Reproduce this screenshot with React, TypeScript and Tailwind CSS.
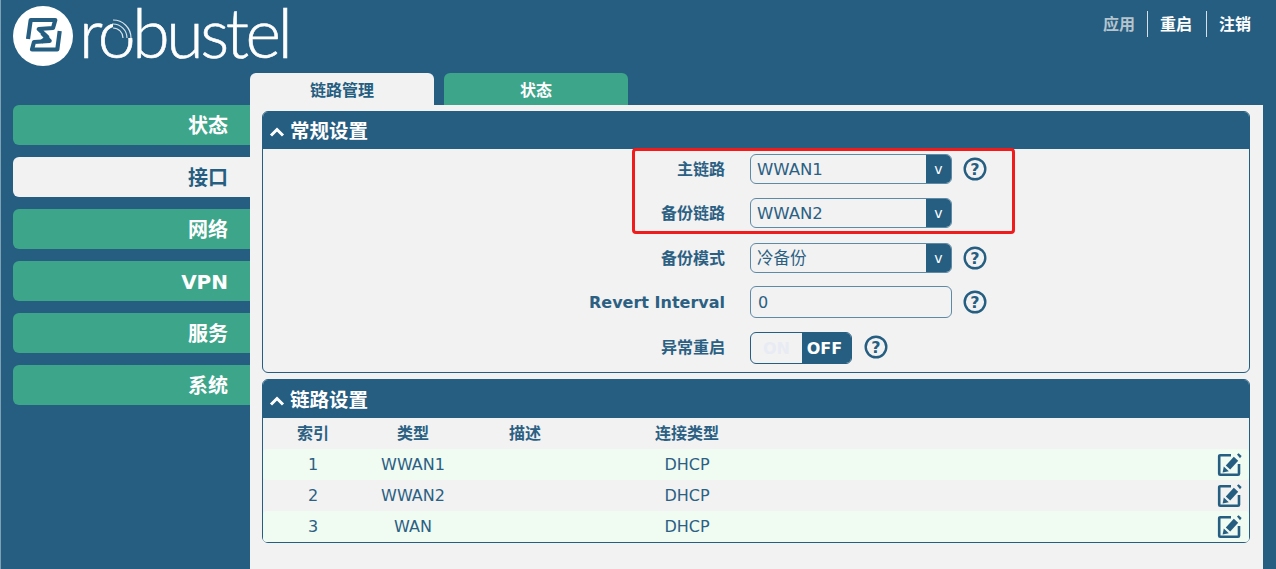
import React from 'react'

const FONT = 'font-["DejaVu_Sans","Noto_Sans_CJK_SC",sans-serif]'

const NAV = [
  { label: '状态' },
  { label: '接口', active: true },
  { label: '网络' },
  { label: 'VPN' },
  { label: '服务' },
  { label: '系统' },
]

const LINKS = [
  { id: 'wwan1', index: '1', type: 'WWAN1', conn: 'DHCP', tinted: true },
  { id: 'wwan2', index: '2', type: 'WWAN2', conn: 'DHCP', tinted: false },
  { id: 'wan', index: '3', type: 'WAN', conn: 'DHCP', tinted: true },
]

function Logo() {
  return (
    <div className="flex items-start h-[73px] pl-[12px]">
      <svg width="60" height="60" viewBox="0 0 60 60" className="shrink-0 mt-[6px]">
        <circle cx="30" cy="30" r="30" fill="#ffffff" />
        <g fill="none" stroke="#255e81" strokeWidth="4.2" strokeLinejoin="round">
          <polyline points="15,33 17.7,14 42.3,14 40,22 25.7,23 34.3,31 28.3,36" />
          <polyline points="46.7,25 44.3,43.5 19,43.5 21,36 36.7,35 29,27" />
        </g>
      </svg>
      <svg width="212" height="66" viewBox="0 0 212 66" className="ml-[6px] shrink-0">
        <text
          x="0"
          y="58"
          fontFamily="Lato"
          fontWeight="300"
          fontSize="68"
          letterSpacing="-3.4"
          fill="#ffffff"
          stroke="#ffffff"
          strokeWidth="0.6"
        >
          robustel
        </text>
        <g fill="none" transform="translate(31 18)">
          <path d="M3 6 A14 14 0 0 1 17 20" stroke="#255e81" strokeWidth="12" />
          <path d="M3 2 A18 18 0 0 1 21 20" stroke="#d7e2e9" strokeWidth="1.2" />
          <path d="M3 6 A14 14 0 0 1 17 20" stroke="#d7e2e9" strokeWidth="1.2" />
          <path d="M3 10 A10 10 0 0 1 13 20" stroke="#d7e2e9" strokeWidth="1.2" />
        </g>
      </svg>
    </div>
  )
}

function HelpIcon() {
  return (
    <svg width="24" height="24" viewBox="0 0 24 24" className="shrink-0">
      <circle cx="12" cy="12" r="10.3" fill="none" stroke="#255e81" strokeWidth="2.4" />
      <text x="12" y="17.5" textAnchor="middle" fontSize="16" fontWeight="700" fill="#255e81" fontFamily="DejaVu Sans">
        ?
      </text>
    </svg>
  )
}

function Chevron() {
  return (
    <svg width="16" height="12" viewBox="0 0 16 12" className="shrink-0">
      <polyline points="2,9.5 8,3.5 14,9.5" fill="none" stroke="#ffffff" strokeWidth="3" />
    </svg>
  )
}

function EditIcon() {
  return (
    <svg width="25" height="25" viewBox="0 0 25 25">
      <path d="M14 3.2 H3.2 A1 1 0 0 0 2.2 4.2 V21.8 A1 1 0 0 0 3.2 22.8 H21 A1 1 0 0 0 22 21.8 V12" fill="none" stroke="#255e81" strokeWidth="2.6" />
      <path d="M11 15.5 L19 6.8" fill="none" stroke="#255e81" strokeWidth="6" />
      <path d="M20 2.6 L21.6 1.2 L24.6 4 L23 6.2 Z" fill="#255e81" />
      <path d="M5.6 20.4 L6.8 14.6 L11.8 19.2 Z" fill="#255e81" />
    </svg>
  )
}

function Select({ value }: { value: string }) {
  return (
    <div className="flex w-[202px] h-[30px] rounded-[6px] border border-[#5f8aa5] overflow-hidden">
      <div className="flex-1 pl-[6px] text-[16.5px] leading-[30px] text-[#2b6083]">{value}</div>
      <div className="w-[25px] bg-[#255e81] text-white text-[14px] leading-[28px] text-center">v</div>
    </div>
  )
}

function FormRow({ label, help = true, children, className = '' }: { label: string; help?: boolean; children: React.ReactNode; className?: string }) {
  return (
    <div className={`flex items-center ${className}`}>
      <div className="w-[462px] pt-[2px] text-right text-[16px] font-bold text-[#2b6083] whitespace-nowrap">{label}</div>
      <div className="ml-[25px]">{children}</div>
      {help && <div className="ml-[11px] flex"><HelpIcon /></div>}
    </div>
  )
}

function SectionHeader({ title, className }: { title: string; className: string }) {
  return (
    <div className={`flex items-center gap-[5px] pl-[6px] bg-[#255e81] rounded-t-[5px] text-white text-[19.5px] font-bold ${className}`}>
      <Chevron />
      <span>{title}</span>
    </div>
  )
}

export default function App() {
  return (
    <div className={`${FONT} relative w-[1276px] h-[569px] overflow-hidden bg-[#255e81] border-l border-l-[#7f9fb5]`}>
      <div className="flex justify-between h-[73px]">
        <Logo />
        <div className="flex items-center h-[25px] mt-[11px] mr-[25px] text-[16px] font-bold text-white">
          <span className="text-[#b5c4ce] pr-[12px] pt-[2px]">应用</span>
          <span className="border-l border-l-[#d5e0e7] pl-[12px] pr-[14px] pt-[2px]">重启</span>
          <span className="border-l border-l-[#d5e0e7] pl-[12px] pt-[2px]">注销</span>
        </div>
      </div>

      <div className="flex">
        <nav className="w-[249px] pt-[32px] pl-[12px] flex flex-col gap-[12px]">
          {NAV.map((item) => (
            <div
              key={item.label}
              className={`h-[40px] rounded-l-[6px] pr-[22px] text-right text-[20px] font-bold leading-[43px] ${
                item.active ? 'bg-[#f2f2f2] text-[#255e81]' : 'bg-[#3da58a] text-white'
              }`}
            >
              {item.label}
            </div>
          ))}
        </nav>

        <div className="w-[1013px]">
          <div className="flex gap-[10px] h-[32px]">
            <div className="w-[184px] rounded-t-[6px] bg-[#f2f2f2] text-center text-[16px] font-bold leading-[35px] text-[#255e81]">链路管理</div>
            <div className="w-[184px] rounded-t-[6px] bg-[#3da58a] text-center text-[16px] font-bold leading-[35px] text-white">状态</div>
          </div>

          <div className="h-[464px] bg-[#f2f2f2] pl-[12px] pr-[13px] pt-[6px]">
            <section className="h-[262px] rounded-[6px] border border-[#255e81]">
              <SectionHeader title="常规设置" className="h-[37px] pt-[2px]" />
              <div className="pt-[5px]">
                <FormRow label="主链路" className="mb-[14px]"><Select value="WWAN1" /></FormRow>
                <FormRow label="备份链路" help={false} className="mb-[15px]"><Select value="WWAN2" /></FormRow>
                <FormRow label="备份模式" className="mb-[13px]"><Select value="冷备份" /></FormRow>
                <FormRow label="Revert Interval" className="mb-[14px]">
                  <div className="w-[202px] h-[32px] rounded-[6px] border border-[#5f8aa5] pl-[7px] text-[16px] leading-[31px] text-[#2b6083]">0</div>
                </FormRow>
                <div className="flex items-center">
                  <div className="w-[462px] text-right text-[16px] font-bold text-[#2b6083]">异常重启</div>
                  <div className="ml-[25px] flex w-[102px] h-[32px] rounded-[6px] border border-[#255e81] overflow-hidden">
                    <div className="w-[51px] text-center text-[16px] font-bold leading-[32px] text-[#e8ebf3]">ON</div>
                    <div className="flex-1 bg-[#255e81] pr-[4px] text-center text-[16px] font-bold leading-[32px] text-white">OFF</div>
                  </div>
                  <div className="ml-[12px] mb-[2px] flex"><HelpIcon /></div>
                </div>
              </div>
            </section>

            <section className="mt-[6px] h-[164px] rounded-[6px] border border-[#255e81]">
              <SectionHeader title="链路设置" className="h-[38px] pt-[3px]" />
              <div className="grid grid-cols-[100px_100px_124px_200px_1fr] h-[31px] items-center text-center text-[16px] font-bold text-[#2b6083]">
                <span>索引</span>
                <span>类型</span>
                <span>描述</span>
                <span>连接类型</span>
              </div>
              {LINKS.map((link) => (
                <div
                  key={link.id}
                  className={`grid grid-cols-[100px_100px_124px_200px_1fr] h-[31px] items-center text-center text-[16px] text-[#2b6083] rounded-[4px] ${
                    link.tinted ? 'bg-[#f0fbf2]' : ''
                  }`}
                >
                  <span>{link.index}</span>
                  <span>{link.type}</span>
                  <span />
                  <span>{link.conn}</span>
                  <span className="flex justify-end pr-[7px]">
                    <EditIcon />
                  </span>
                </div>
              ))}
            </section>
          </div>
        </div>
      </div>

      <div className="absolute left-[631px] top-[148px] w-[383px] h-[86px] rounded-[4px] border-[3px] border-[#f01c1c]" />
    </div>
  )
}
